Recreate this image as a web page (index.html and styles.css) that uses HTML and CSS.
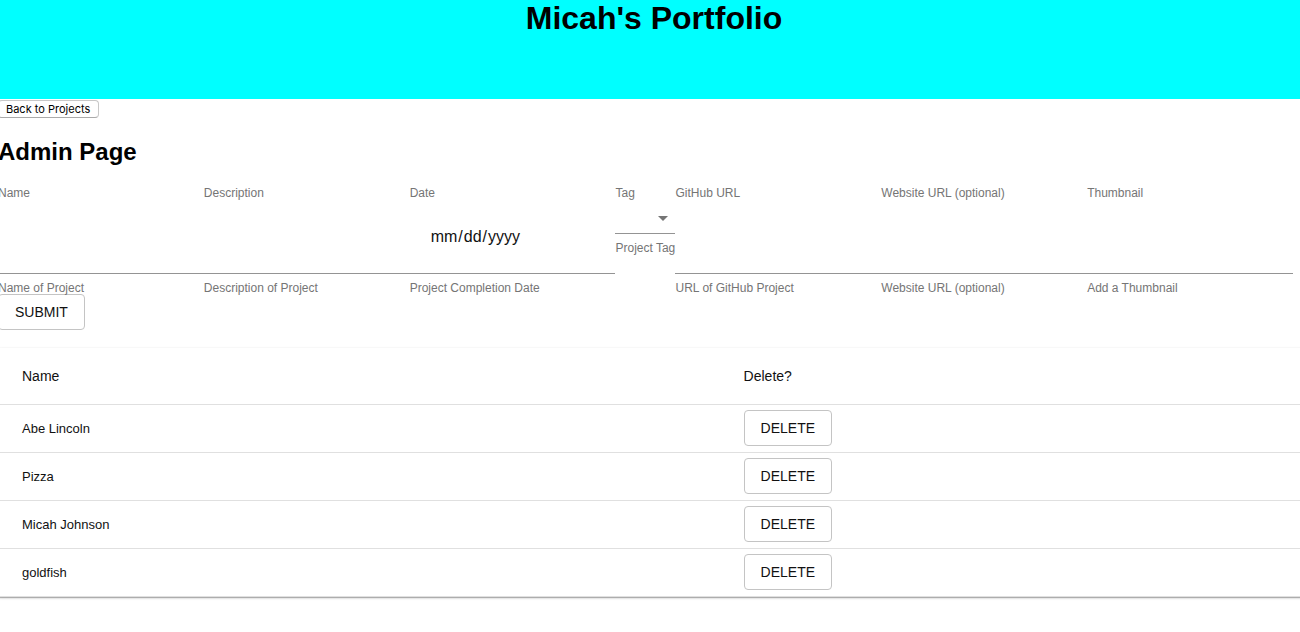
FILE: index.html
```html
<!DOCTYPE html>
<html lang="en">
<head>
<meta charset="utf-8">
<title>Micah's Portfolio</title>
<link rel="stylesheet" href="styles.css">
</head>
<body>
<div class="page">
  <header class="banner"><h1 class="title">Micah's Portfolio</h1></header>
  <main>
    <button class="back" type="button">Back to Projects</button>
    <h2 class="heading">Admin Page</h2>
    <form>
      <div class="fields">
        <div class="field">
          <label class="label" for="name">Name</label>
          <input class="input" id="name" type="text" aria-describedby="name-help">
          <p class="help" id="name-help">Name of Project</p>
        </div>
        <div class="field">
          <label class="label" for="description">Description</label>
          <input class="input" id="description" type="text" aria-describedby="description-help">
          <p class="help" id="description-help">Description of Project</p>
        </div>
        <div class="field">
          <label class="label" for="date">Date</label>
          <input class="input" id="date" type="date" aria-describedby="date-help">
          <p class="help" id="date-help">Project Completion Date</p>
        </div>
        <div class="field field-tag">
          <label class="label" for="tag">Tag</label>
          <div class="select-wrap">
            <select class="select" id="tag" aria-describedby="tag-help"><option value=""></option></select>
            <svg class="arrow" viewBox="0 0 24 24" aria-hidden="true"><path d="M7 10l5 5 5-5z"/></svg>
          </div>
          <p class="help" id="tag-help">Project Tag</p>
        </div>
        <div class="field">
          <label class="label" for="github">GitHub URL</label>
          <input class="input" id="github" type="text" aria-describedby="github-help">
          <p class="help" id="github-help">URL of GitHub Project</p>
        </div>
        <div class="field">
          <label class="label" for="website">Website URL (optional)</label>
          <input class="input" id="website" type="text" aria-describedby="website-help">
          <p class="help" id="website-help">Website URL (optional)</p>
        </div>
        <div class="field">
          <label class="label" for="thumbnail">Thumbnail</label>
          <input class="input" id="thumbnail" type="text" aria-describedby="thumbnail-help">
          <p class="help" id="thumbnail-help">Add a Thumbnail</p>
        </div>
      </div>
      <button class="button" type="submit">SUBMIT</button>
    </form>
    <div class="paper">
      <table class="table">
        <thead>
          <tr><th class="name-col">Name</th><th>Delete?</th></tr>
        </thead>
        <tbody>
          <tr><td>Abe Lincoln</td><td class="action"><button class="button" type="button">DELETE</button></td></tr>
          <tr><td>Pizza</td><td class="action"><button class="button" type="button">DELETE</button></td></tr>
          <tr><td>Micah Johnson</td><td class="action"><button class="button" type="button">DELETE</button></td></tr>
          <tr><td>goldfish</td><td class="action"><button class="button" type="button">DELETE</button></td></tr>
        </tbody>
      </table>
    </div>
  </main>
</div>
</body>
</html>
```
FILE: styles.css
```css
* { box-sizing: border-box; }
body {
  min-height: 100vh;
  margin: 0;
  overflow-x: hidden;
  background: #fff;
  color: #000;
  font-family: "Liberation Sans", Arial, sans-serif;
}
.page { margin: 0 -10px 0 -2px; }
.banner { min-height: 99px; background: #00ffff; text-align: center; }
.title { margin: 0; font-size: 32px; line-height: 36px; }
.back {
  display: block;
  height: 18px;
  margin-top: 1px;
  padding: 0 8px 0 7px;
  border: 1px solid #c8c8c8;
  border-bottom-color: #aaa;
  border-radius: 4px;
  background: #fff;
  color: #000;
  font: 11px/16px Inter, sans-serif;
}
.heading { margin: 20px 0; font-size: 24px; line-height: 28px; }
.fields { display: flex; align-items: flex-start; margin-right: 17px; }
.field { flex: 1 1 0; min-width: 0; }
.field-tag { flex: 0 0 60px; }
.label { display: block; color: #757575; font-size: 12px; line-height: 14px; white-space: nowrap; }
.input {
  display: block;
  width: 100%;
  height: 74px;
  padding: 20px;
  border: 0;
  border-bottom: 1px solid #949494;
  border-radius: 0;
  background: transparent;
  color: #111;
  font: 16px/32px "Liberation Sans", Arial, sans-serif;
}
.input::-webkit-calendar-picker-indicator { display: none; }
.select-wrap { position: relative; height: 34px; }
.select {
  display: block;
  width: 100%;
  height: 100%;
  border: 0;
  border-bottom: 1px solid #949494;
  border-radius: 0;
  background: transparent;
  appearance: none;
}
.arrow { position: absolute; top: 6px; right: 0; width: 24px; height: 24px; fill: #757575; pointer-events: none; }
.help { margin: 8px 0 0; color: #757575; font-size: 12px; line-height: 12px; white-space: nowrap; }
.button {
  height: 36px;
  padding: 0 16px;
  border: 1px solid #c4c4c4;
  border-radius: 4px;
  background: transparent;
  color: #111;
  font: 14px/24px "Liberation Sans", Arial, sans-serif;
}
form .button { display: block; }
.paper {
  margin-top: 18px;
  border-radius: 2px;
  background: #fff;
  box-shadow: 0 1px 3px rgba(0, 0, 0, .2), 0 1px 1px rgba(0, 0, 0, .14), 0 2px 1px -1px rgba(0, 0, 0, .12);
}
.table { width: 100%; border-collapse: separate; border-spacing: 0; }
.table th, .table td {
  height: 48px;
  padding: 0 24px;
  border-bottom: 1px solid #e0e0e0;
  color: #111;
  font-size: 13px;
  font-weight: 400;
  text-align: left;
  vertical-align: middle;
}
.table th { height: 57px; font-size: 14px; }
.name-col { width: 55%; }
.table .action { padding-bottom: 2px; }
.table .button { display: block; }
```
